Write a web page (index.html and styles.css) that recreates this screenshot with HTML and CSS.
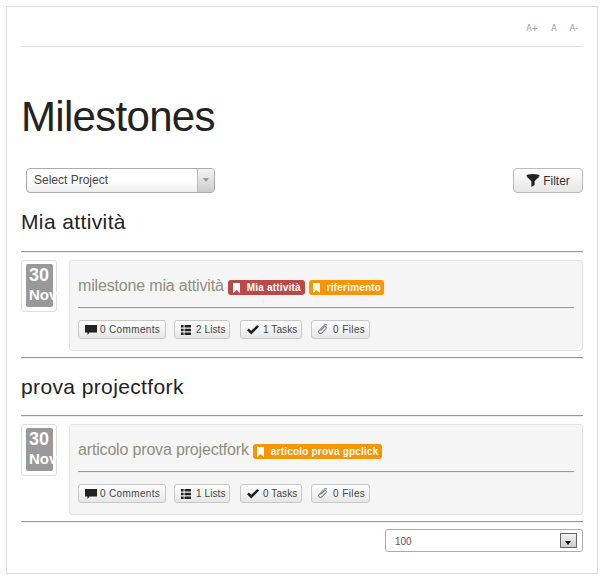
FILE: index.html
```html
<!DOCTYPE html>
<html lang="it">
<head>
<meta charset="utf-8">
<title>Milestones</title>
<link rel="stylesheet" href="styles.css">
</head>
<body>
<svg class="defs" width="0" height="0" aria-hidden="true">
  <symbol id="i-comment" viewBox="0 0 12 10"><path d="M0 0h12v7.5H4.5L2.5 10V7.5H0z"/></symbol>
  <symbol id="i-list" viewBox="0 0 10 10"><path d="M0 0h2.6v2.6H0zM3.6 0H10v2.6H3.6zM0 3.7h2.6v2.6H0zM3.6 3.7H10v2.6H3.6zM0 7.4h2.6V10H0zM3.6 7.4H10V10H3.6z"/></symbol>
  <symbol id="i-check" viewBox="0 0 12 10"><path d="M0 5.2l1.8-1.8 2.4 2.4L10.2 0 12 1.8 4.2 9.6z"/></symbol>
  <symbol id="i-clip" viewBox="0 0 11 12"><path d="M10 1.4c-1-1-2.4-.9-3.4.1L1.3 7.1c-.8.8-.8 2 0 2.8s2 .8 2.8 0l4.7-5c.5-.5.5-1.3 0-1.8s-1.3-.5-1.8 0L3 7.3" fill="none" stroke="#555" stroke-width="1.1"/></symbol>
  <symbol id="i-tag" viewBox="0 0 7 10"><path d="M0 0h7v10L3.5 7 0 10z"/></symbol>
</svg>
<main class="frame">
  <div class="fontsize">
    <span>A+</span><span>A</span><span>A-</span>
  </div>
  <h1 class="title">Milestones</h1>
  <div class="filters">
    <div class="chosen">
      <span class="chosen-text">Select Project</span>
      <span class="chosen-arrow"></span>
    </div>
    <button class="btn-filter" type="button">
      <svg width="14" height="13" viewBox="0 0 14 13"><ellipse cx="7" cy="1.6" rx="6.6" ry="1.6" fill="#222"/><path d="M0.4 2.2C2 4 4.5 6 5.4 7.4V13L8.6 11V7.4C9.5 6 12 4 13.6 2.2z" fill="#222"/></svg>
      Filter
    </button>
  </div>

  <h2 class="group">Mia attività</h2>
  <hr class="rule">
  <section class="row">
    <div class="date"><div class="date-inner"><span class="day">30</span><span class="month">Nov</span></div></div>
    <div class="card">
      <div class="card-head">
        <span class="card-title">milestone mia attività</span>
        <span class="label red"><svg class="tag" width="7" height="10"><use href="#i-tag"/></svg>Mia attività</span>
        <span class="label orange"><svg class="tag" width="7" height="10"><use href="#i-tag"/></svg>riferimento</span>
      </div>
      <hr class="rule inner">
      <div class="actions">
        <span class="act"><svg width="12" height="10"><use href="#i-comment"/></svg>0 Comments</span>
        <span class="act"><svg width="10" height="10"><use href="#i-list"/></svg>2 Lists</span>
        <span class="act"><svg width="12" height="10"><use href="#i-check"/></svg>1 Tasks</span>
        <span class="act"><svg width="10" height="11"><use href="#i-clip"/></svg>0 Files</span>
      </div>
    </div>
  </section>
  <hr class="rule after">

  <h2 class="group">prova projectfork</h2>
  <hr class="rule">
  <section class="row">
    <div class="date"><div class="date-inner"><span class="day">30</span><span class="month">Nov</span></div></div>
    <div class="card">
      <div class="card-head">
        <span class="card-title">articolo prova projectfork</span>
        <span class="label orange"><svg class="tag" width="7" height="10"><use href="#i-tag"/></svg>articolo prova gpclick</span>
      </div>
      <hr class="rule inner">
      <div class="actions">
        <span class="act"><svg width="12" height="10"><use href="#i-comment"/></svg>0 Comments</span>
        <span class="act"><svg width="10" height="10"><use href="#i-list"/></svg>1 Lists</span>
        <span class="act"><svg width="12" height="10"><use href="#i-check"/></svg>0 Tasks</span>
        <span class="act"><svg width="10" height="11"><use href="#i-clip"/></svg>0 Files</span>
      </div>
    </div>
  </section>
  <hr class="rule after">

  <div class="pager">
    <div class="limit">
      <span class="limit-text">100</span>
      <span class="limit-arrow"></span>
    </div>
  </div>
</main>
</body>
</html>
```

FILE: styles.css
```css
* { box-sizing: border-box; }
html, body { margin: 0; background: #fff; }
body {
  padding: 6px 6px 5px;
  font-family: "Liberation Sans", Arial, sans-serif;
  color: #222;
  width: 603px;
}
.defs { display: block; height: 0; }
.frame {
  width: 592px;
  height: 568px;
  border: 1px solid #ddd;
  padding: 0 14px;
}
.fontsize {
  height: 40px;
  border-bottom: 1px solid #ddd;
  display: flex;
  justify-content: flex-end;
  gap: 13px;
  padding: 17px 5px 0 0;
  font-family: "DejaVu Sans", sans-serif;
  font-size: 8px;
  line-height: 10px;
  color: #999;
}
.title {
  margin: 47px 0 0;
  font-size: 42px;
  line-height: 46px;
  font-weight: 400;
  letter-spacing: -0.7px;
  color: #222;
}
.filters {
  display: flex;
  justify-content: space-between;
  align-items: center;
  margin-top: 28px;
  padding-left: 5px;
}
.chosen {
  width: 189px;
  height: 25px;
  border: 1px solid #aaa;
  border-radius: 4px;
  background: linear-gradient(#fff 50%, #eee);
  display: flex;
  justify-content: space-between;
  overflow: hidden;
}
.chosen-text {
  padding-left: 7px;
  font-size: 12px;
  line-height: 22px;
  color: #444;
}
.chosen-arrow {
  width: 17px;
  border-left: 1px solid #bbb;
  background: linear-gradient(#f4f4f4, #ccc);
  position: relative;
}
.chosen-arrow::after {
  content: "";
  position: absolute;
  left: 5px;
  top: 9px;
  border: 3px solid transparent;
  border-top: 4px solid #999;
  border-bottom: 0;
}
.btn-filter {
  width: 70px;
  height: 25px;
  padding: 0;
  border: 1px solid #bbb;
  border-radius: 4px;
  background: linear-gradient(#fff, #e6e6e6);
  font-family: inherit;
  font-size: 12px;
  color: #333;
  display: flex;
  align-items: center;
  justify-content: center;
  gap: 3px;
}
.group {
  margin: 15px 0 0;
  font-size: 21px;
  line-height: 28px;
  font-weight: 400;
  letter-spacing: 0.38px;
  color: #222;
}
.rule {
  margin: 0;
  border: 0;
  border-top: 1px solid #999;
  border-bottom: 1px solid #eee;
  height: 2px;
}
.group + .rule { margin-top: 15px; }
.after { margin-top: 6px; }
.after + .group { margin-top: 14px; }
.after + .group + .rule { margin-top: 14px; }
.row {
  display: flex;
  gap: 12px;
  margin-top: 7px;
}
.date {
  width: 36px;
  height: 52px;
  flex: none;
  border: 1px solid #ddd;
  border-radius: 3px;
  padding: 3px 4px;
  background: #fff;
}
.date-inner {
  width: 27px;
  height: 43px;
  background: #999;
  border-radius: 2px;
  color: #fff;
  font-weight: 700;
  display: flex;
  flex-direction: column;
  align-items: flex-start;
  padding: 1px 0 0 3px;
}
.day { font-size: 18px; line-height: 21px; }
.month { font-size: 15px; line-height: 18px; white-space: nowrap; }
.card {
  flex: 1;
  height: 91px;
  background: #f5f5f5;
  border: 1px solid #e3e3e3;
  border-radius: 3px;
  padding: 0 8px;
}
.card-head {
  display: flex;
  align-items: center;
  gap: 4px;
  height: 46px;
  padding-top: 3px;
}
.card-title {
  font-size: 16px;
  letter-spacing: -0.17px;
  color: #8f8f7d;
}
.label {
  height: 15px;
  border-radius: 3px;
  display: inline-flex;
  align-items: center;
  font-size: 10px;
  letter-spacing: 0.2px;
  font-weight: 700;
  color: #fff;
  white-space: nowrap;
  margin-top: 4px;
}
.tag { fill: #fff; margin-right: 7px; flex: none; }
.red { background: #b94a48; padding: 0 4px 0 5px; }
.orange { background: #f89406; padding: 0 3px 0 4px; }
.inner { width: 496px; }
.actions {
  display: flex;
  gap: 8px;
  margin-top: 11px;
}
.act {
  height: 19px;
  border: 1px solid #c8c8c8;
  border-radius: 3px;
  background: linear-gradient(#fff, #e6e6e6);
  padding: 0 0 0 6px;
  display: inline-flex;
  align-items: center;
  gap: 5px;
  font-size: 10px;
  letter-spacing: 0.1px;
  color: #444;
  white-space: nowrap;
}
.act:nth-child(1) { width: 88px; gap: 3px; letter-spacing: 0.35px; }
.act:nth-child(2) { width: 56px; }
.act:nth-child(3) { width: 62px; margin-left: 2px; gap: 4px; }
.act:nth-child(4) { width: 59px; margin-left: 1px; letter-spacing: 0.4px; }
.act svg { fill: #222; flex: none; }
.pager {
  display: flex;
  justify-content: flex-end;
  margin-top: 6px;
}
.limit {
  width: 198px;
  height: 23px;
  border: 1px solid #aaa;
  border-radius: 3px;
  background: #fff;
  display: flex;
  align-items: center;
  justify-content: space-between;
  padding: 0 5px 0 9px;
  font-size: 10px;
  color: #555;
}
.limit-text { padding-top: 1px; }
.limit-arrow {
  width: 17px;
  height: 15px;
  border: 1px solid #666;
  background: linear-gradient(#f4f4f4, #ccc);
  position: relative;
}
.limit-arrow::after {
  content: "";
  position: absolute;
  left: 4px;
  top: 7px;
  border: 3.5px solid transparent;
  border-top: 4px solid #000;
  border-bottom: 0;
}
```
